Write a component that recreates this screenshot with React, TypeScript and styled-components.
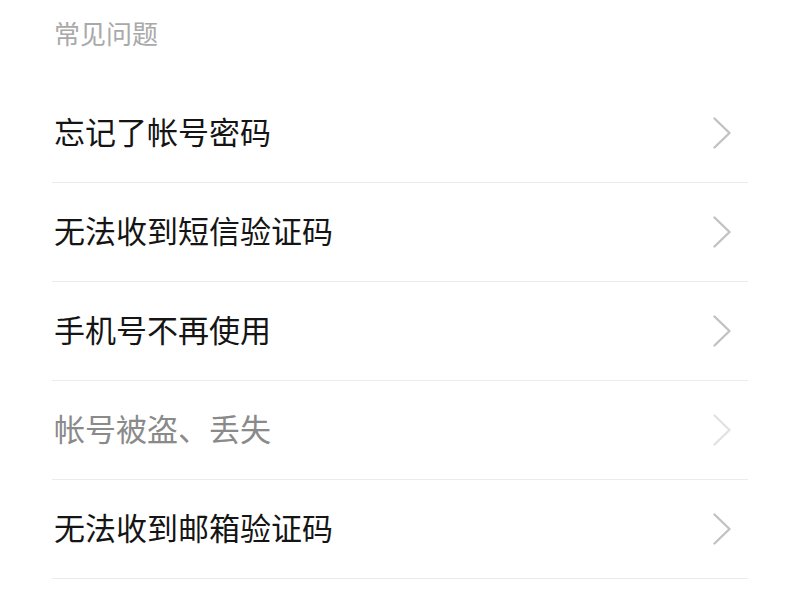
import styled, { createGlobalStyle } from "styled-components";

const GlobalStyle = createGlobalStyle`
  html, body {
    margin: 0;
    padding: 0;
    background: #ffffff;
    font-family: "Noto Sans CJK SC", "Noto Sans", sans-serif;
  }
`;

const Page = styled.div`
  width: 800px;
  height: 599px;
  overflow: hidden;
  background: #ffffff;
`;

const Section = styled.div`
  padding: 0 52px;
`;

const SectionTitle = styled.div`
  height: 84px;
  padding-top: 13px;
  box-sizing: border-box;
  padding-left: 2px;
  font-size: 26px;
  line-height: 40px;
  color: #a9a9a9;
`;

const List = styled.ul`
  list-style: none;
  margin: 0;
  padding: 0;
`;

const Row = styled.li<{ $muted?: boolean }>`
  display: flex;
  align-items: center;
  justify-content: space-between;
  height: 98px;
  border-bottom: 1px solid #ececec;
  padding: 0 17px 0 2px;
  color: ${(p) => (p.$muted ? "#8a8a8a" : "#151515")};
`;

const Label = styled.span`
  font-size: 31px;
  line-height: 40px;
  padding-bottom: 4px;
`;

const Chevron = styled.svg<{ $muted?: boolean }>`
  width: 18px;
  height: 32px;
  color: ${(p) => (p.$muted ? "#e2e2e2" : "#c2c2c2")};
`;

interface IQuestion {
  id: number;
  title: string;
  muted?: boolean;
}

const questions: IQuestion[] = [
  { id: 1, title: "忘记了帐号密码" },
  { id: 2, title: "无法收到短信验证码" },
  { id: 3, title: "手机号不再使用" },
  { id: 4, title: "帐号被盗、丢失", muted: true },
  { id: 5, title: "无法收到邮箱验证码" },
];

function App() {
  return (
    <>
      <GlobalStyle />
      <Page>
        <Section>
          <SectionTitle>常见问题</SectionTitle>
          <List>
            {questions.map((q) => (
              <Row key={q.id} $muted={q.muted}>
                <Label>{q.title}</Label>
                <Chevron $muted={q.muted} viewBox="0 0 18 32" fill="none">
                  <path
                    d="M1.5 1.5 L16.5 16 L1.5 30.5"
                    stroke="currentColor"
                    strokeWidth="2.4"
                    strokeLinecap="round"
                    strokeLinejoin="round"
                  />
                </Chevron>
              </Row>
            ))}
          </List>
        </Section>
      </Page>
    </>
  );
}

export default App;
